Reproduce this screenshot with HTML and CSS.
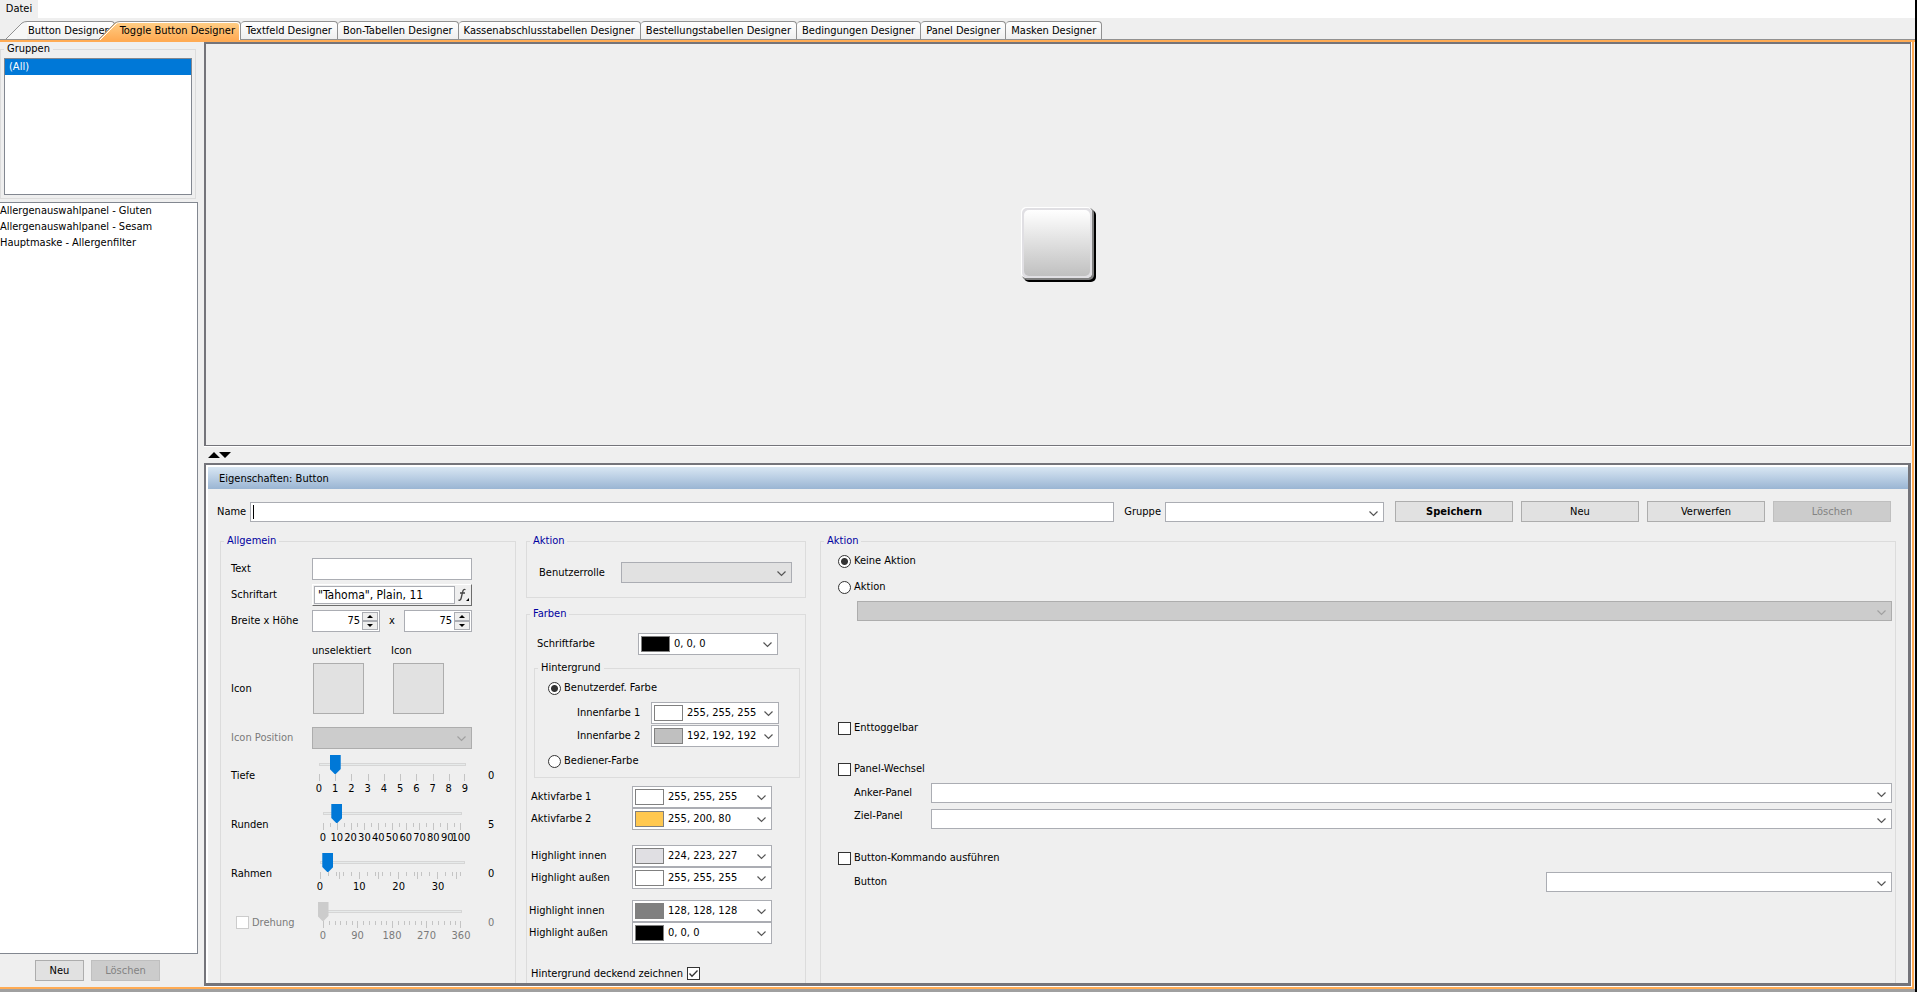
FILE: index.html
```html
<!DOCTYPE html>
<html lang="de">
<head>
<meta charset="utf-8">
<title>Toggle Button Designer</title>
<link rel="stylesheet" href="styles.css">
</head>
<body>
<div class="app">
  <header class="menubar"><button class="menu" type="button">Datei</button></header>

  <nav class="tabs" role="tablist">
    <button class="tab tab-slanted" role="tab" type="button">
      <svg class="ear" width="21" height="18" viewBox="0 0 21 18"><path d="M0 18 L16 2 Q18 .5 21 .5 V18 Z" fill="#f7f7f7"/><path d="M0 18 L16 2 Q18 .5 21 .5" fill="none" stroke="#919191"/></svg><span class="tab-text">Button Designer</span></button>
    <button class="tab tab-slanted tab-active" role="tab" aria-selected="true" type="button">
      <svg class="ear" width="21" height="19" viewBox="0 0 21 19"><defs><linearGradient id="orange" x1="0" y1="0" x2="0" y2="1"><stop offset="0" stop-color="#ffcf87"/><stop offset="1" stop-color="#ffab54"/></linearGradient></defs><path d="M0 19 L16 2 Q18 .5 21 .5 V19 Z" fill="url(#orange)"/><path d="M1 19 L17 3 Q18 1.500 21 1.500" fill="none" stroke="#fff"/><path d="M0 18 L16 2 Q18 .5 21 .5" fill="none" stroke="#919191"/></svg><span class="tab-text">Toggle Button Designer</span></button>
    <button class="tab" role="tab" type="button"><span class="tab-text">Textfeld Designer</span></button>
    <button class="tab" role="tab" type="button"><span class="tab-text">Bon-Tabellen Designer</span></button>
    <button class="tab" role="tab" type="button"><span class="tab-text">Kassenabschlusstabellen Designer</span></button>
    <button class="tab" role="tab" type="button"><span class="tab-text">Bestellungstabellen Designer</span></button>
    <button class="tab" role="tab" type="button"><span class="tab-text">Bedingungen Designer</span></button>
    <button class="tab" role="tab" type="button"><span class="tab-text">Panel Designer</span></button>
    <button class="tab" role="tab" type="button"><span class="tab-text">Masken Designer</span></button>
  </nav>

  <main class="workspace">
    <aside class="sidebar">
      <fieldset class="group groups">
        <legend class="legend">Gruppen</legend>
        <ul class="group-list" role="listbox" aria-label="Gruppen"><li class="selected" role="option" aria-selected="true">(All)</li></ul>
      </fieldset>
      <ul class="item-list" role="listbox" aria-label="Toggle Buttons">
        <li role="option">Allergenauswahlpanel - Gluten</li>
        <li role="option">Allergenauswahlpanel - Sesam</li>
        <li role="option">Hauptmaske - Allergenfilter</li>
      </ul>
      <div class="sidebar-actions">
        <button class="btn btn-new" type="button">Neu</button>
        <button class="btn btn-delete" type="button" disabled>Löschen</button>
      </div>
    </aside>

    <div class="editor">
      <section class="preview">
        <button class="toggle-preview" type="button" aria-label="Vorschau">
          <svg width="75" height="75" viewBox="0 0 75 75"><defs><linearGradient id="face" x1="0" y1="0" x2="0" y2="1"><stop offset="0" stop-color="#fff"/><stop offset="1" stop-color="#c0c0c0"/></linearGradient></defs>
            <rect x="3" y="3" width="72" height="72" rx="5" fill="#000"/><rect x="1" y="1" width="72" height="72" rx="5" fill="#808080"/><rect x="0" y="0" width="71" height="71" rx="5" fill="#fff"/><rect x="1" y="1" width="70" height="70" rx="5" fill="#e0dfe3"/><rect x="3" y="3" width="66" height="66" rx="5" fill="url(#face)"/></svg>
        </button>
      </section>

      <div class="splitter">
        <svg width="24" height="7" viewBox="0 0 24 7"><path d="M0 6 L6 0 L12 6 Z M11 0 H23 L17 6 Z" fill="#000"/></svg>
      </div>

      <section class="properties">
        <h1 class="title">Eigenschaften: Button</h1>
        <div class="headline">
          <label for="name">Name</label>
          <input class="field name-field" id="name" type="text">
          <label for="gruppe">Gruppe</label>
          <select class="field select group-select" id="gruppe"><option></option></select>
          <div class="actions">
            <button class="btn btn-strong" type="button">Speichern</button>
            <button class="btn" type="button">Neu</button>
            <button class="btn" type="button">Verwerfen</button>
            <button class="btn" type="button" disabled>Löschen</button>
          </div>
        </div>

        <div class="columns">
          <fieldset class="group open general">
            <legend class="legend blue">Allgemein</legend>
            <div class="general-body">
              <div class="row"><label class="caption" for="text">Text</label><input class="field wide" id="text" type="text"></div>
              <div class="row"><label class="caption" for="font">Schriftart</label>
                <div class="font-field"><input class="font-input" id="font" type="text" value='"Tahoma", Plain, 11'>
                  <button class="font-button" type="button" aria-label="Schriftart wählen"><svg width="14" height="14" viewBox="0 0 14 14"><path d="M9.500 1.800 Q7.300 .5 6.600 4 L5.200 10 Q4.500 13 2.400 12 M4 5 H9" fill="none" stroke="#444" stroke-width="1.300"/><path d="M13 10 V13 H10 Z" fill="#000"/></svg></button></div></div>
              <div class="row"><label class="caption" for="breite">Breite x Höhe</label>
                <div class="size-fields">
                  <div class="spin"><input id="breite" type="text" value="75"><div class="steps"><button type="button" aria-label="Breiter"><svg width="6" height="3"><path d="M0 3 L3 0 L6 3Z"/></svg></button><button type="button" aria-label="Schmaler"><svg width="6" height="3"><path d="M0 0 H6 L3 3Z"/></svg></button></div></div>
                  <span>x</span>
                  <div class="spin"><input type="text" value="75" aria-label="Höhe"><div class="steps"><button type="button" aria-label="Höher"><svg width="6" height="3"><path d="M0 3 L3 0 L6 3Z"/></svg></button><button type="button" aria-label="Niedriger"><svg width="6" height="3"><path d="M0 0 H6 L3 3Z"/></svg></button></div></div>
                </div></div>
              <div class="row icon-heads"><span class="caption"></span><span class="icon-head">unselektiert</span><span>Icon</span></div>
              <div class="row icon-row"><span class="caption">Icon</span><button class="icon-box" type="button" aria-label="Icon unselektiert"></button><button class="icon-box" type="button" aria-label="Icon"></button></div>
              <div class="row icon-position"><label class="caption dim" for="iconpos">Icon Position</label><select class="field select wide" id="iconpos" disabled><option></option></select></div>

              <div class="row slider-row"><label class="caption" for="tiefe">Tiefe</label>
                <div class="slider"><div class="scale scale-depth"><input id="tiefe" type="range" min="0" max="9" value="1">
                  <svg class="ticks" height="8" viewBox="0 0 146 8"><path d="M.5 0V7M16.500 0V7M32.500 0V7M49.500 0V7M65.500 0V7M81.500 0V7M97.500 0V7M114.500 0V7M130.500 0V7M145.500 0V7"/></svg>
                  <div class="numbers"><span>0</span><span>1</span><span>2</span><span>3</span><span>4</span><span>5</span><span>6</span><span>7</span><span>8</span><span>9</span></div></div></div><output>0</output></div>
              <div class="row slider-row"><label class="caption" for="runden">Runden</label>
                <div class="slider"><div class="scale scale-round"><input id="runden" type="range" min="0" max="100" value="10">
                  <svg class="ticks" height="8" viewBox="0 0 138 8"><path d="M.5 0V7M14.500 0V7M28.500 0V7M41.500 0V7M55.500 0V7M69.500 0V7M83.500 0V7M96.500 0V7M110.500 0V7M124.500 0V7M137.500 0V7M7.500 0V4M21.500 0V4M34.500 0V4M48.500 0V4M62.500 0V4M76.500 0V4M90.500 0V4M103.500 0V4M117.500 0V4M131.500 0V4"/></svg>
                  <div class="numbers"><span>0</span><span>10</span><span>20</span><span>30</span><span>40</span><span>50</span><span>60</span><span>70</span><span>80</span><span>90</span><span>100</span></div></div></div><output>5</output></div>
              <div class="row slider-row"><label class="caption" for="rahmen">Rahmen</label>
                <div class="slider"><div class="scale scale-frame"><input id="rahmen" type="range" min="0" max="37" value="2">
                  <svg class="ticks" height="8" viewBox="0 0 144 8"><path d="M.5 0V7M19.500 0V7M39.500 0V7M58.500 0V7M78.500 0V7M97.500 0V7M117.500 0V7M136.500 0V7M8.500 0V4M16.500 0V4M23.500 0V4M31.500 0V4M47.500 0V4M55.500 0V4M62.500 0V4M70.500 0V4M86.500 0V4M94.500 0V4M101.500 0V4M109.500 0V4M125.500 0V4M132.500 0V4M140.500 0V4"/></svg>
                  <div class="numbers numbers-frame"><span>0</span><span>10</span><span>20</span><span>30</span></div></div></div><output>0</output></div>
              <div class="row slider-row dim"><label class="caption rotate"><input class="check" type="checkbox" disabled>Drehung</label>
                <div class="slider"><div class="scale scale-round"><input type="range" min="0" max="360" value="0" disabled aria-label="Drehung">
                  <svg class="ticks" height="8" viewBox="0 0 138 8"><path d="M.5 0V7M34.500 0V7M69.500 0V7M103.500 0V7M137.500 0V7M6.500 0V4M12.500 0V4M17.500 0V4M23.500 0V4M29.500 0V4M40.500 0V4M46.500 0V4M52.500 0V4M58.500 0V4M63.500 0V4M75.500 0V4M81.500 0V4M86.500 0V4M92.500 0V4M98.500 0V4M109.500 0V4M115.500 0V4M121.500 0V4M127.500 0V4M132.500 0V4"/></svg>
                  <div class="numbers"><span>0</span><span>90</span><span>180</span><span>270</span><span>360</span></div></div></div><output>0</output></div>
            </div>
          </fieldset>

          <div class="middle">
            <fieldset class="group">
              <legend class="legend blue">Aktion</legend>
              <div class="role-row"><label for="rolle">Benutzerrolle</label><select class="field select role-select" id="rolle"><option></option></select></div>
            </fieldset>
            <fieldset class="group open colors">
              <legend class="legend blue">Farben</legend>
              <div class="colors-body">
                <div class="color-row font-color"><label for="c1">Schriftfarbe</label><div class="combo"><i class="swatch black"></i><select class="select" id="c1"><option>0, 0, 0</option></select></div></div>
                <fieldset class="group background">
                  <legend class="legend">Hintergrund</legend>
                  <div class="background-body">
                    <label class="choice"><input class="radio" type="radio" name="bg" checked>Benutzerdef. Farbe</label>
                    <div class="inner-colors">
                      <div class="color-row"><label for="c2">Innenfarbe 1</label><div class="combo combo-inner"><i class="swatch white"></i><select class="select" id="c2"><option>255, 255, 255</option></select></div></div>
                      <div class="color-row"><label for="c3">Innenfarbe 2</label><div class="combo combo-inner"><i class="swatch silver"></i><select class="select" id="c3"><option>192, 192, 192</option></select></div></div>
                    </div>
                    <label class="choice"><input class="radio" type="radio" name="bg">Bediener-Farbe</label>
                  </div>
                </fieldset>
                <div class="pair pair-active">
                  <div class="color-row"><label for="c4">Aktivfarbe 1</label><div class="combo"><i class="swatch white"></i><select class="select" id="c4"><option>255, 255, 255</option></select></div></div>
                  <div class="color-row"><label for="c5">Aktivfarbe 2</label><div class="combo"><i class="swatch amber"></i><select class="select" id="c5"><option>255, 200, 80</option></select></div></div>
                </div>
                <div class="pair pair-light">
                  <div class="color-row"><label for="c6">Highlight innen</label><div class="combo"><i class="swatch pale"></i><select class="select" id="c6"><option>224, 223, 227</option></select></div></div>
                  <div class="color-row"><label for="c7">Highlight außen</label><div class="combo"><i class="swatch white"></i><select class="select" id="c7"><option>255, 255, 255</option></select></div></div>
                </div>
                <div class="pair pair-dark">
                  <div class="color-row"><label for="c8">Highlight innen</label><div class="combo"><i class="swatch gray"></i><select class="select" id="c8"><option>128, 128, 128</option></select></div></div>
                  <div class="color-row"><label for="c9">Highlight außen</label><div class="combo"><i class="swatch black"></i><select class="select" id="c9"><option>0, 0, 0</option></select></div></div>
                </div>
                <label class="opaque">Hintergrund deckend zeichnen<input class="check" type="checkbox" checked></label>
              </div>
            </fieldset>
          </div>

          <fieldset class="group open command">
            <legend class="legend blue">Aktion</legend>
            <div class="command-body">
              <label class="choice"><input class="radio" type="radio" name="act" checked>Keine Aktion</label>
              <label class="choice second"><input class="radio" type="radio" name="act">Aktion</label>
              <div class="action-row"><select class="field select" disabled aria-label="Aktion"><option></option></select></div>
              <label class="choice untoggle"><input class="check" type="checkbox">Enttoggelbar</label>
              <label class="choice panel-switch"><input class="check" type="checkbox">Panel-Wechsel</label>
              <div class="panel-grid">
                <label class="middle-label" for="anker">Anker-Panel</label><select class="field select" id="anker"><option></option></select>
                <label for="ziel">Ziel-Panel</label><select class="field select" id="ziel"><option></option></select>
              </div>
              <label class="choice run-command"><input class="check" type="checkbox">Button-Kommando ausführen</label>
              <div class="button-row"><label for="button">Button</label><select class="field select" id="button"><option></option></select></div>
            </div>
          </fieldset>
        </div>
      </section>
    </div>
  </main>
</div>
</body>
</html>
```
FILE: styles.css
```css
* { box-sizing: border-box; }

html, body { height: 100%; }

body {
  margin: 0;
  background: #efefef;
  color: #000;
  font: 11px/14px "DejaVu Sans Condensed", "DejaVu Sans", sans-serif;
}

button, input, select {
  margin: 0;
  padding: 0;
  border: 0;
  border-radius: 0;
  background: none;
  color: inherit;
  font: inherit;
  outline: 0;
}

ul { margin: 0; padding: 0; list-style: none; }
svg { display: block; flex: none; }

.app {
  display: flex;
  flex-direction: column;
  min-height: 100%;
  border-right: 2px solid #000;
  background: linear-gradient(#efefef, #efefef) 0 0 / 100% calc(100% - 3px) no-repeat #a0a0a0;
}

/* menu and tabs */
.menubar { display: flex; height: 18px; background: #fff; }
.menu { width: 38px; background: #efefef; text-align: center; }

.tabs {
  display: flex;
  height: 24px;
  padding: 3px 0 0 6px;
  border-bottom: 2px solid #ffab54;
  box-shadow: inset 0 -1px #919191;
}
.tab { display: flex; height: 18px; flex: none; white-space: nowrap; }
.tab-text {
  height: 18px;
  padding: 2px 5px 0;
  border: 1px solid #919191;
  border-width: 1px 1px 0 0;
  border-radius: 4px 4px 0 0;
  background: linear-gradient(#fff, #efefef);
}
.tab-slanted .tab-text { padding-left: 1px; border-top-left-radius: 0; }
.tab-active { z-index: 1; height: 19px; margin-left: -16px; }
.tab-active .tab-text {
  height: 19px;
  padding-left: 0;
  background: linear-gradient(#ffcf87, #ffab54);
  box-shadow: inset -1px 1px #fff;
}

/* frame */
.workspace {
  display: flex;
  flex: 1;
  margin: 0 1px 3px 0;
  border: solid #ffab54;
  border-width: 0 2px 2px 0;
}

.sidebar { display: flex; flex: none; flex-direction: column; width: 204px; padding-bottom: 6px; }

.group { min-width: 0; margin: 0; padding: 0; border: 1px solid #dcdcdc; }
.group.open { border-bottom: 0; }
.legend { margin-left: 3px; padding: 0 3px; }
.blue { color: #0000a0; }

.groups { width: 196px; }
.group-list {
  height: 137px;
  margin: 2px 3px 3px;
  border: 1px solid #828790;
  background: #fff;
}
.group-list li { height: 16px; padding: 1px 4px; }
.selected { background: #0078d7; color: #fff; }
.item-list {
  flex: 1;
  width: 198px;
  margin-top: 3px;
  border: 1px solid #828790;
  border-left: 0;
  background: #fff;
}
.item-list li { height: 16px; padding-top: 1px; }
.sidebar-actions { display: flex; gap: 7px; padding: 6px 0 0 35px; }

.btn {
  width: 118px;
  height: 21px;
  border: 1px solid #adadad;
  background: #e1e1e1;
  text-align: center;
}
.btn:disabled { border-color: #bfbfbf; background: #ccc; color: #838383; }
.btn-strong { font-weight: bold; }
.btn-new { width: 49px; }
.btn-delete { width: 69px; }

/* editor */
.editor { display: flex; flex: 1; flex-direction: column; min-width: 0; padding-bottom: 1px; background: linear-gradient(#fff, #fff) bottom / 100% 1px no-repeat; }
.preview {
  display: flex;
  flex: 1;
  align-items: center;
  justify-content: center;
  margin-right: 1px;
  border: 2px solid #74747a;
  border-width: 2px 1px 1px 2px;
  box-shadow: 0 1px #fff, 1px 0 #fff;
}
.splitter { height: 17px; padding: 6px 0 0 4px; }

.properties {
  margin-right: 1px;
  border: solid #74747a;
  border-width: 2px 3px 3px 2px;
  box-shadow: inset 2px 2px #fff, 1px 0 #fff;
  padding: 2px 0 0 2px;
}
.title {
  height: 22px;
  margin: 0;
  padding: 5px 11px 3px;
  background: linear-gradient(#d8e6f3, #9ab5d3);
  font-size: 11px;
  font-weight: normal;
}
.headline { display: flex; align-items: center; height: 21px; margin: 12px 17px 12px 9px; }
.headline label { flex: none; }
.field { height: 20px; border: 1px solid #abadb3; background-color: #fff; }
.name-field {
  flex: 1;
  min-width: 0;
  margin: 0 10px 0 4px;
  padding: 0 3px;
  background: linear-gradient(#000, #000) 2px 2px / 1px 14px no-repeat #fff;
  caret-color: transparent;
}
.select {
  appearance: none;
  min-width: 0;
  background: url("data:image/svg+xml,%3Csvg xmlns='http://www.w3.org/2000/svg' width='9' height='6'%3E%3Cpath d='M.5 .5 4.500 4.500 8.500 .5' fill='none' stroke='%23555' stroke-width='1.200'/%3E%3C/svg%3E") right 5px top 8px no-repeat #fff;
}
.select:disabled {
  border-color: #adadad;
  opacity: 1;
  background: url("data:image/svg+xml,%3Csvg xmlns='http://www.w3.org/2000/svg' width='9' height='6'%3E%3Cpath d='M.5 .5 4.500 4.500 8.500 .5' fill='none' stroke='%23a0a0a0' stroke-width='1.200'/%3E%3C/svg%3E") right 5px top 8px no-repeat #ccc;
}
.group-select { width: 219px; margin: 0 11px 0 4px; }
.actions { display: flex; gap: 8px; }

.columns { display: flex; margin: 0 12px; }

/* general settings */
.general { width: 296px; flex: none; margin-right: 10px; }
.general-body { display: flex; flex-direction: column; gap: 4px; padding: 10px 0 0 10px; }
.row { display: flex; align-items: center; min-height: 22px; }
.caption { flex: none; width: 81px; }
.wide { width: 160px; height: 22px; }
.dim { color: #7a7a7a; }

.font-field {
  display: flex;
  width: 160px;
  height: 22px;
  padding: 1px 0;
  border: 1px solid #fff;
  border-right-color: #6d6d6d;
  border-bottom-color: #6d6d6d;
}
.font-input { width: 141px; margin-left: 1px; padding-left: 3px; border: 1px solid #abadb3; background: #fff; font-size: 12px; }
.font-button { display: flex; flex: 1; align-items: center; justify-content: center; }

.size-fields { display: flex; align-items: center; justify-content: space-between; width: 160px; }
.spin { display: flex; width: 68px; height: 22px; padding: 1px; border: 1px solid #abadb3; background: #fff; }
.spin input { flex: 1; min-width: 0; padding-right: 2px; text-align: right; }
.steps { display: flex; flex-direction: column; width: 16px; }
.steps button { display: flex; flex: 1; align-items: center; justify-content: center; border: 1px solid #abadb3; background: #eee; }

.icon-heads { min-height: 14px; margin-top: 8px; }
.icon-head { width: 79px; }
.icon-row { margin-top: 1px; }
.icon-box { width: 51px; height: 51px; margin: 0 28px 0 1px; border: 1px solid #adadad; background: #e1e1e1; }
.icon-position { margin-top: 9px; }

.slider-row { height: 45px; }
.slider { display: flex; justify-content: center; width: 160px; margin-right: 16px; }
.scale { display: flex; flex-direction: column; align-items: center; }
.scale-depth { width: 157px; }
.scale-round { width: 149px; }
.scale-frame { width: 155px; }
.ticks { width: calc(100% - 11px); fill: none; stroke: #c4c4c4; }
.numbers { display: flex; justify-content: space-between; width: calc(100% - 11px); }
.numbers span { display: flex; justify-content: center; width: 0; }
.numbers-frame { width: 118px; margin-right: 26px; }

input[type="range"] {
  appearance: none;
  display: block;
  width: 100%;
  height: 19px;
  background:
    linear-gradient(#e7eaea, #e7eaea) 6px 9px / calc(100% - 12px) 1px no-repeat,
    linear-gradient(#d6d6d6, #d6d6d6) 5px 8px / calc(100% - 10px) 3px no-repeat;
}
input[type="range"]::-webkit-slider-thumb {
  appearance: none;
  width: 11px;
  height: 19px;
  background: #0078d7;
  clip-path: polygon(0 0, 100% 0, 100% 74%, 55% 100%, 45% 100%, 0 74%);
}
input[type="range"]:disabled::-webkit-slider-thumb { background: #ccc; }

/* check boxes and radio buttons */
.check {
  appearance: none;
  flex: none;
  width: 13px;
  height: 13px;
  border: 1px solid #333;
  background: #fff;
}
.check:checked {
  background: url("data:image/svg+xml,%3Csvg xmlns='http://www.w3.org/2000/svg' width='11' height='11'%3E%3Cpath d='M1.500 5.500 4 8.200 9.500 2.500' fill='none' stroke='%23333' stroke-width='1.300'/%3E%3C/svg%3E") center no-repeat #fff;
}
.check:disabled { border-color: #ccc; }
.radio {
  appearance: none;
  flex: none;
  width: 13px;
  height: 13px;
  border: 1px solid #333;
  border-radius: 50%;
  background: #fff;
}
.radio:checked { background: radial-gradient(circle, #333 3px, #fff 4px); }
.choice { display: flex; align-items: center; gap: 3px; height: 14px; }
.rotate { display: flex; align-items: center; gap: 3px; padding-left: 5px; }

/* colors */
.middle { width: 280px; flex: none; margin-right: 14px; }
.role-row { display: flex; align-items: center; justify-content: space-between; padding: 14px 13px 14px 12px; }
.role-select { width: 171px; height: 21px; background-color: #e1e1e1; }
.colors { margin-top: 9px; }
.colors-body { padding: 12px 0 2px; }
.color-row { display: flex; align-items: center; justify-content: space-between; }
.font-color { padding: 0 27px 0 10px; }
.combo {
  display: flex;
  align-items: center;
  width: 140px;
  height: 22px;
  padding-left: 2px;
  border: 1px solid #abadb3;
  background: #fff;
}
.combo .select { flex: 1; height: 20px; padding-left: 4px; }
.combo-inner { width: 128px; }
.swatch { flex: none; width: 29px; height: 16px; border: 1px solid #808080; }
.black { background: #000; }
.white { background: #fff; }
.silver { background: #c0c0c0; }
.amber { background: #ffc850; }
.pale { background: #e0dfe3; }
.gray { background: #808080; }

.background { margin: 6px 5px 8px 7px; }
.background-body { padding: 6px 20px 9px 13px; }
.inner-colors { display: flex; flex-direction: column; gap: 1px; margin: 7px 0 7px 29px; }
.pair { padding: 0 33px 0 4px; }
.pair-light { padding-top: 15px; }
.pair-dark { padding-top: 11px; padding-left: 2px; }
.opaque { display: flex; align-items: center; gap: 4px; margin: 22px 0 0 4px; height: 15px; }

/* command */
.command { flex: 1; }
.command-body { padding: 6px 3px 0 17px; }
.command-body .field { width: 100%; }
.second { margin-top: 12px; }
.action-row { display: flex; margin-top: 7px; padding-left: 19px; }
.untoggle { margin-top: 100px; }
.panel-switch { margin-top: 27px; }
.panel-grid { display: grid; grid-template-columns: 77px 1fr; gap: 6px 0; margin: 7px 0 0 16px; }
.middle-label { align-self: center; }
.run-command { margin-top: 22px; }
.button-row { display: grid; grid-template-columns: 2fr 1fr; align-items: center; margin: 7px 0 0 16px; }
```
